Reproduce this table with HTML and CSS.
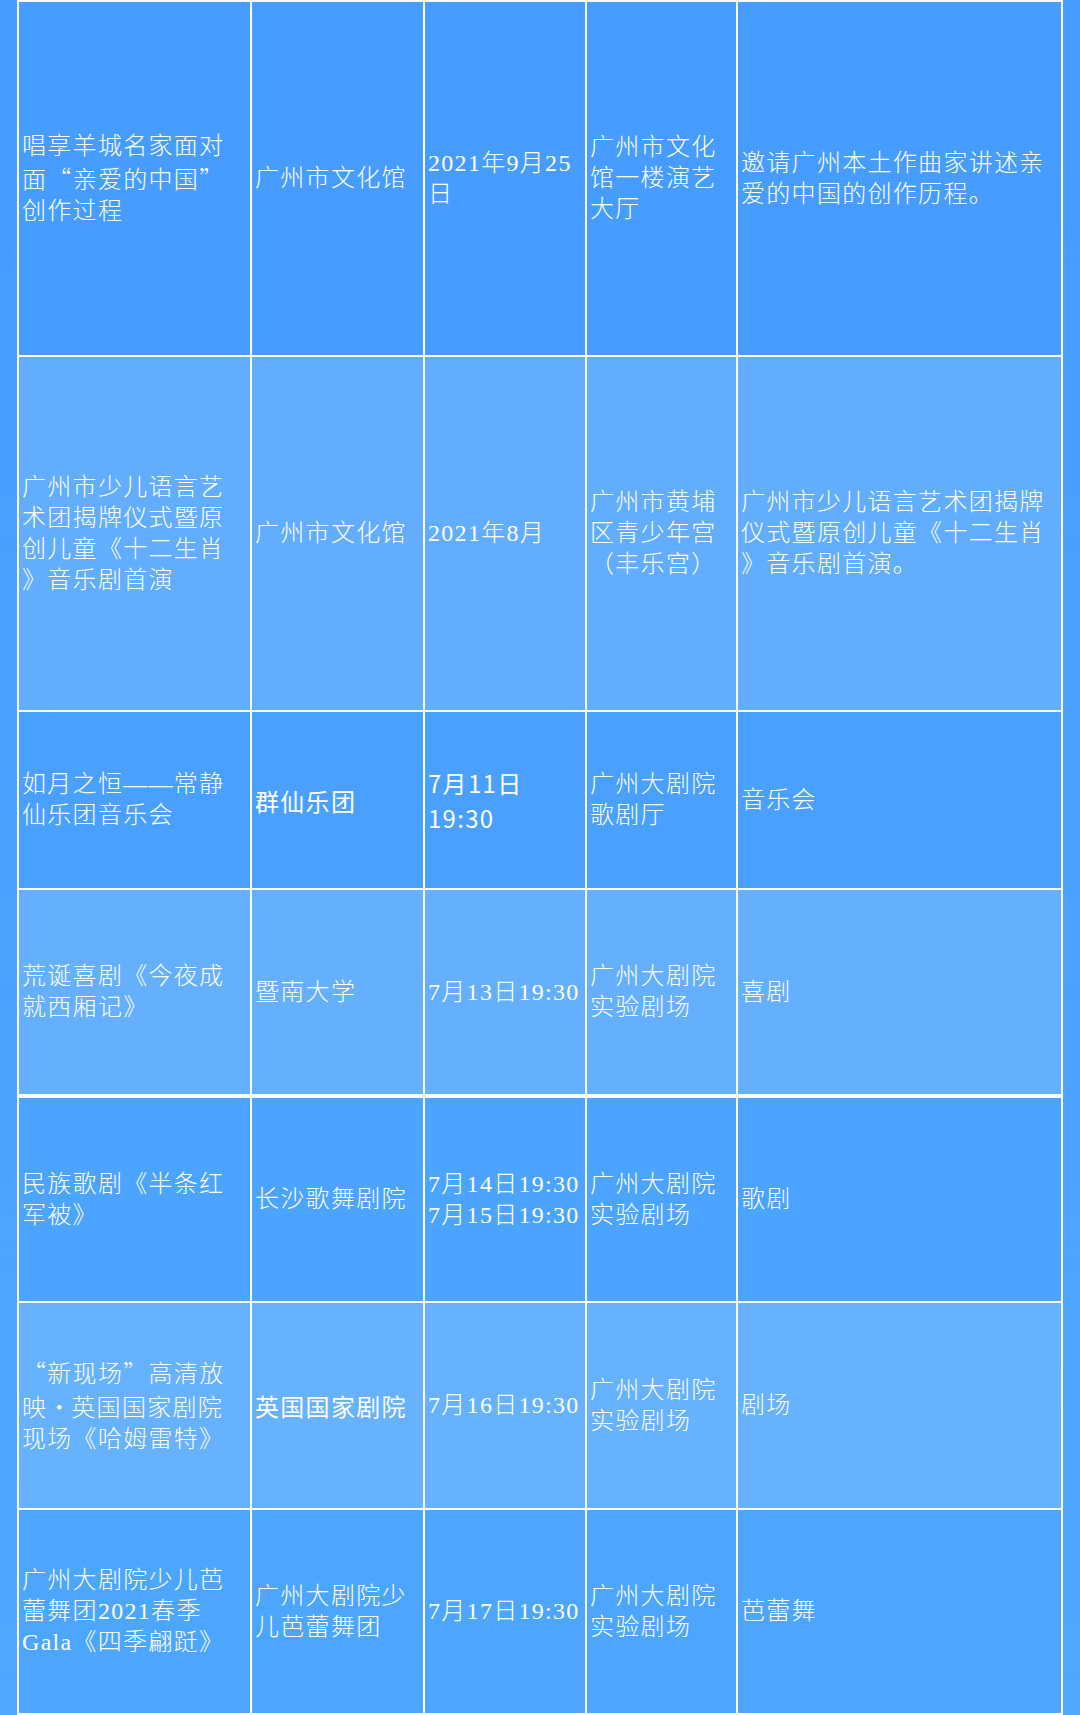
FILE: index.html
```html
<!DOCTYPE html>
<html lang="zh-CN">
<head>
<meta charset="utf-8">
<title>演出活动表</title>
<link rel="stylesheet" href="styles.css">
</head>
<body>
<div class="sheet">
  <div class="row tall tone-1">
    <div class="cell"><p>唱享羊城名家面对<br>面<span class="q">“</span>亲爱的中国<span class="q">”</span><br>创作过程</p></div>
    <div class="cell"><p>广州市文化馆</p></div>
    <div class="cell"><p>2021年9月25<br>日</p></div>
    <div class="cell"><p>广州市文化<br>馆一楼演艺<br>大厅</p></div>
    <div class="cell"><p>邀请广州本土作曲家讲述亲<br>爱的中国的创作历程。</p></div>
  </div>
  <div class="row tall tone-2">
    <div class="cell"><p>广州市少儿语言艺<br>术团揭牌仪式暨原<br>创儿童《十二生肖<br>》音乐剧首演</p></div>
    <div class="cell"><p>广州市文化馆</p></div>
    <div class="cell"><p>2021年8月</p></div>
    <div class="cell"><p>广州市黄埔<br>区青少年宫<br>（丰乐宫）</p></div>
    <div class="cell"><p>广州市少儿语言艺术团揭牌<br>仪式暨原创儿童《十二生肖<br>》音乐剧首演。</p></div>
  </div>
  <div class="row short tone-3">
    <div class="cell"><p>如月之恒——常静<br>仙乐团音乐会</p></div>
    <div class="cell sans"><p>群仙乐团</p></div>
    <div class="cell sans"><p>7月11日<br>19:30</p></div>
    <div class="cell"><p>广州大剧院<br>歌剧厅</p></div>
    <div class="cell"><p>音乐会</p></div>
  </div>
  <div class="row mid tone-4">
    <div class="cell"><p>荒诞喜剧《今夜成<br>就西厢记》</p></div>
    <div class="cell"><p>暨南大学</p></div>
    <div class="cell"><p>7月13日19:30</p></div>
    <div class="cell"><p>广州大剧院<br>实验剧场</p></div>
    <div class="cell"><p>喜剧</p></div>
  </div>
  <div class="row low split tone-5">
    <div class="cell"><p>民族歌剧《半条红<br>军被》</p></div>
    <div class="cell"><p>长沙歌舞剧院</p></div>
    <div class="cell"><p>7月14日19:30<br>7月15日19:30</p></div>
    <div class="cell"><p>广州大剧院<br>实验剧场</p></div>
    <div class="cell"><p>歌剧</p></div>
  </div>
  <div class="row mid2 tone-6">
    <div class="cell"><p><span class="q">“</span>新现场<span class="q">”</span>高清放<br>映<span class="dot">·</span>英国国家剧院<br>现场《哈姆雷特》</p></div>
    <div class="cell sans"><p>英国国家剧院</p></div>
    <div class="cell"><p>7月16日19:30</p></div>
    <div class="cell"><p>广州大剧院<br>实验剧场</p></div>
    <div class="cell"><p>剧场</p></div>
  </div>
  <div class="row low tone-7">
    <div class="cell"><p>广州大剧院少儿芭<br>蕾舞团2021春季<br>Gala《四季翩跹》</p></div>
    <div class="cell"><p>广州大剧院少<br>儿芭蕾舞团</p></div>
    <div class="cell"><p>7月17日19:30</p></div>
    <div class="cell"><p>广州大剧院<br>实验剧场</p></div>
    <div class="cell"><p>芭蕾舞</p></div>
  </div>
</div>
</body>
</html>
```

FILE: styles.css
```css
* {
  box-sizing: border-box;
}

html,
body {
  margin: 0;
  padding: 0;
}

body {
  min-height: 1715px;
  background: linear-gradient(to bottom, #469cff 0%, #4ba3ff 60%, #4ea8ff 100%);
  font-family: "Liberation Serif", "Noto Sans CJK SC", serif;
}

.sheet {
  margin: 0 17px;
  padding: 2px;
  background: #ffffff;
  display: flex;
  flex-direction: column;
  gap: 2px;
}

.row {
  display: grid;
  grid-template-columns: 231px 171px 160px 149px 323px;
  gap: 2px;
}

.row.tall { height: 353px; }
.row.short { height: 176px; }
.row.mid { height: 204px; }
.row.mid2 { height: 205px; }
.row.low { height: 203px; }
.row.split { margin-top: 2px; }

.tone-1 .cell { background: #479dff; }
.tone-2 .cell { background: #63adfe; }
.tone-3 .cell { background: #49a0ff; }
.tone-4 .cell { background: #65b0fe; }
.tone-5 .cell { background: #4ba4ff; }
.tone-6 .cell { background: #66b2fe; }
.tone-7 .cell { background: #4da6fe; }

.cell {
  display: flex;
  align-items: center;
  padding: 0 3px;
  overflow: hidden;
  color: #ffffff;
}

.cell p {
  margin: 0;
  font-size: 24px;
  line-height: 31px;
  letter-spacing: 1.3px;
  font-weight: 300;
  white-space: nowrap;
}

.cell.sans p {
  font-family: "Noto Sans CJK SC", "Noto Sans", sans-serif;
  font-weight: 400;
  line-height: 35px;
}

.q {
  font-family: "Noto Sans CJK SC", sans-serif;
}

.dot {
  display: inline-block;
  width: 24px;
  text-align: center;
  font-family: "Noto Sans CJK SC", sans-serif;
}
```
